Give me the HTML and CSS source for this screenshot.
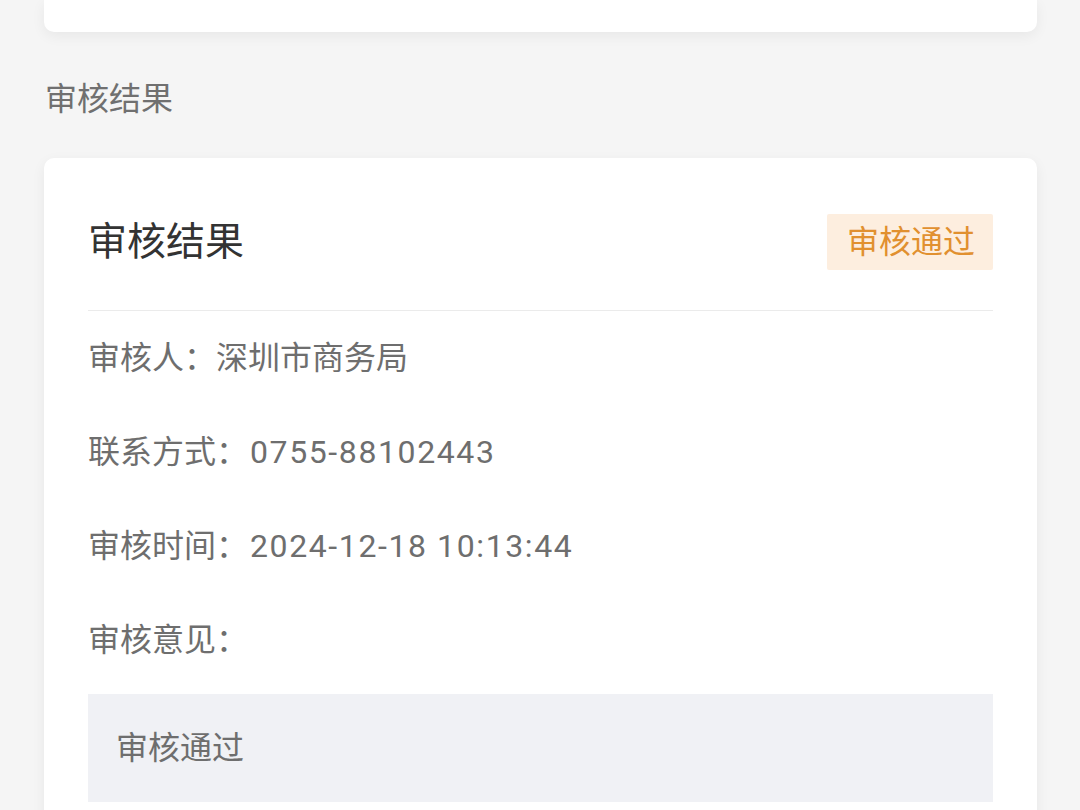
FILE: index.html
```html
<!DOCTYPE html>
<html lang="zh-CN">
<head>
<meta charset="utf-8">
<title>审核结果</title>
<link rel="stylesheet" href="styles.css">
</head>
<body>
<div class="page">
  <div class="card card-top"></div>
  <div class="section-label">审核结果</div>
  <div class="card card-result">
    <div class="result-head">
      <div class="result-title">审核结果</div>
      <div class="badge">审核通过</div>
    </div>
    <div class="divider"></div>
    <div class="row">审核人：深圳市商务局</div>
    <div class="row">联系方式：<span class="num">0755-88102443</span></div>
    <div class="row">审核时间：<span class="num">2024-12-18 10:13:44</span></div>
    <div class="row">审核意见：</div>
    <div class="opinion">审核通过</div>
  </div>
</div>
</body>
</html>
```

FILE: styles.css
```css
html, body {
  margin: 0;
  padding: 0;
  background: #f5f5f5;
}
body {
  font-family: Roboto, "Noto Sans CJK SC", sans-serif;
  width: 1080px;
  height: 810px;
  overflow: hidden;
}
.page {
  padding: 0 43px 0 44px;
}
.card {
  background: #fff;
  box-shadow: 0 4px 14px rgba(0, 0, 0, 0.06);
}
.card-top {
  height: 32px;
  border-radius: 0 0 10px 10px;
}
.section-label {
  margin: 43px 0 35px 1px;
  font-size: 32px;
  line-height: 48px;
  color: #707070;
}
.card-result {
  border-radius: 10px 10px 0 0;
  padding: 56px 44px 40px 44px;
}
.result-head {
  display: flex;
  align-items: center;
  justify-content: space-between;
  height: 56px;
}
.result-title {
  font-size: 39px;
  color: #333;
  line-height: 56px;
}
.badge {
  height: 56px;
  line-height: 56px;
  padding: 0 18px 0 20px;
  background: #fdeedf;
  color: #e1902f;
  font-size: 32px;
  border-radius: 2px;
}
.divider {
  margin-top: 40px;
  height: 1px;
  background: #ebebeb;
}
.row {
  height: 94px;
  line-height: 94px;
  font-size: 32px;
  color: #6e6e6e;
}
.num {
  margin-left: 2px;
  letter-spacing: 1.6px;
}
.opinion {
  margin-top: 7px;
  background: #f0f1f5;
  height: 108px;
  line-height: 108px;
  padding-left: 28px;
  font-size: 32px;
  color: #6e6e6e;
}
```
